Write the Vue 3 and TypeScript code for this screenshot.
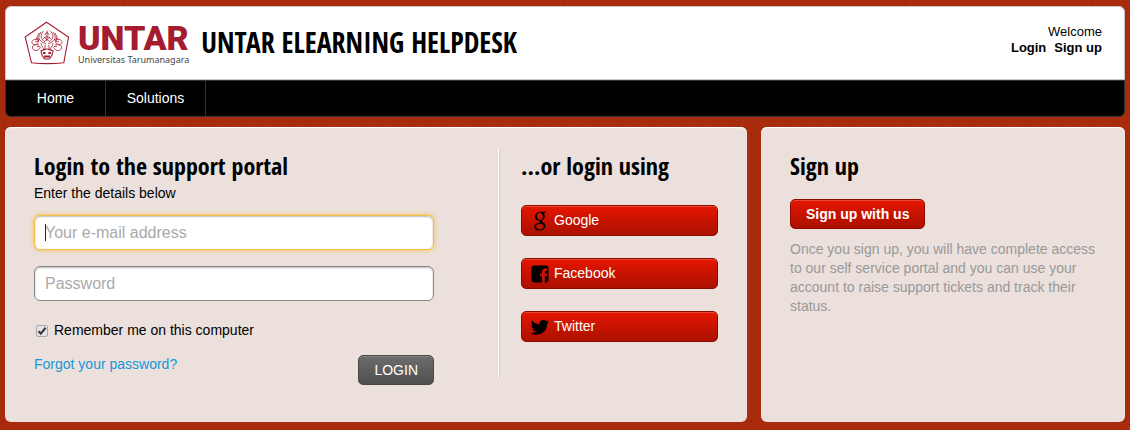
<script setup lang="ts">
import { onMounted, ref } from 'vue'

const navItems: string[] = ['Home', 'Solutions']
const email = ref('')
const password = ref('')
const remember = ref(true)
const emailField = ref<HTMLInputElement | null>(null)

onMounted(() => emailField.value?.focus())
</script>

<template>
  <div class="page">
    <header>
      <div class="banner">
        <a class="brand" href="#">
          <svg class="crest" viewBox="0 0 46 44" fill="none" stroke="#a51c30" aria-hidden="true">
            <path d="M22.5 1.2 44.500 16 39.800 41.800Q23 43.500 7.500 41.800L1.200 16Z" stroke-width="1.100" />
            <g stroke-width=".8">
              <path d="M17 11q-5 6 1 10M29 11q5 6-1 10M19.500 10q-5 5 0 10M26.500 10q5 5 0 10M15 12q-4 6 0 9M31 12q4 6 0 9" />
              <path d="M23 9.500v10M21 14q2-5 4 0M19 18q4-5 8 0M18 21l4 2M28 21l-4 2M20 16l6 5M26 16l-6 5" />
              <path d="M15 20c-4-4-8 0-7 2s5 2 6 0-2-2-3-1M31 20c4-4 8 0 7 2s-5 2-6 0 2-2 3-1" />
              <path d="M15 24c-5-1-8 1-6 4s6 1 7-1-2-2-3-1M31 24c5-1 8 1 6 4s-6 1-7-1 2-2 3-1" />
              <path d="M17 22c0 4 3 4 3 8M29 22c0 4-3 4-3 8M21 24v5M25 24v5M12 17l4 2M34 17l-4 2" />
              <path d="M17 30q6-4 12 0-1 6-4 8h-4q-3-2-4-8Z" stroke-width="1.200" />
              <path d="M19 32h2.500M24.500 32H27M20 35.500h6" stroke-width="2" />
            </g>
          </svg>
          <span class="wordmark">
            <span class="wordmark-name">UNTAR</span>
            <span class="wordmark-sub">Universitas Tarumanagara</span>
          </span>
        </a>
        <h1>UNTAR ELEARNING HELPDESK</h1>
        <div class="account">
          <span>Welcome</span>
          <div class="account-links"><a href="#">Login</a><a href="#">Sign up</a></div>
        </div>
      </div>
      <nav class="nav">
        <a v-for="item in navItems" :key="item" href="#">{{ item }}</a>
      </nav>
    </header>

    <main class="content">
      <section class="panel login-panel">
        <form class="login" @submit.prevent>
          <h2>Login to the support portal</h2>
          <p class="hint">Enter the details below</p>
          <div class="field-wrap">
            <input ref="emailField" v-model="email" class="field email" type="email" placeholder="Your e-mail address" aria-label="Your e-mail address" />
            <span v-if="!email" class="caret"></span>
          </div>
          <input v-model="password" class="field" type="password" placeholder="Password" aria-label="Password" />
          <label class="remember">
            <input v-model="remember" type="checkbox" />
            <svg class="tick" viewBox="0 0 12 12" aria-hidden="true">
              <rect x=".5" y=".5" width="11" height="11" rx="1.500" fill="#e4e4e4" stroke="#a8a8a8" />
              <path v-if="remember" d="M2.500 6.200 4.800 8.600 9.600 2.800" fill="none" stroke="#3c3c3c" stroke-width="2.200" />
            </svg>
            Remember me on this computer
          </label>
          <div class="actions">
            <a href="#">Forgot your password?</a>
            <button class="btn btn-dark" type="submit">LOGIN</button>
          </div>
        </form>
        <div class="social">
          <h2>...or login using</h2>
          <button class="btn btn-social" type="button">
            <svg viewBox="0 0 18 20" aria-hidden="true">
              <path fill="#000" fill-rule="evenodd" d="M9.800.8H15.500L14 1.900H12.300C13.300 2.700 13.800 3.900 13.800 5.100C13.800 7 12.700 8.200 11.600 9C10.600 9.800 10.800 10.400 11.800 11.100C13.200 12.100 14.400 13.100 14.400 15C14.400 17.500 12 19.500 8.500 19.500C5.300 19.500 3.200 18.100 3.200 15.800C3.200 13.200 6 12 9 11.900C8.400 11.200 8.200 10.700 8.500 9.800C5.600 10 4 8 4 5.700C4 3 6.400.8 9.800.8ZM9 1.800C6.900 1.800 6 3 6 4.700C6 6.900 7.200 8.900 9.300 8.900C11 8.900 11.800 7.800 11.800 6.200C11.800 4 10.700 1.800 9 1.800ZM9.700 12.700C7 12.700 5 13.500 5 15.500C5 17.300 6.700 18.400 9 18.400C11.400 18.400 12.700 17.300 12.700 15.700C12.700 14.300 11.700 13.700 10.400 12.700Z" />
            </svg>
            <span>Google</span>
          </button>
          <button class="btn btn-social" type="button">
            <svg viewBox="0 0 18 20" aria-hidden="true">
              <path fill="#000" fill-rule="evenodd" d="M3.500 1.500h11Q17.500 1.500 17.500 4.500v11q0 3-3 3h-.6v-6.300h2l.3-2.600h-2.300V8.200q0-1.200 1.200-1.200h1.200V4.600H14.200q-3.200 0-3.200 3.200v1.800H9v2.600h2v6.300H3.500q-3 0-3-3v-11q0-3 3-3Z" />
            </svg>
            <span>Facebook</span>
          </button>
          <button class="btn btn-social" type="button">
            <svg viewBox="0 0 18 20" aria-hidden="true">
              <path fill="#000" transform="translate(-.2 1.200) scale(.76)" d="M23.950 4.570a10 10 0 0 1-2.820.77 4.960 4.960 0 0 0 2.160-2.720c-.95.550-2 .950-3.130 1.180a4.920 4.920 0 0 0-8.380 4.480C7.690 8.090 4.070 6.130 1.640 3.160a4.820 4.820 0 0 0-.66 2.480c0 1.710.87 3.210 2.190 4.090a4.900 4.900 0 0 1-2.230-.61v.06a4.920 4.920 0 0 0 3.950 4.830 5 5 0 0 1-2.210.080 4.940 4.940 0 0 0 4.600 3.420A9.870 9.870 0 0 1 0 19.540a13.990 13.990 0 0 0 7.550 2.210c9.050 0 14-7.500 14-13.980 0-.210 0-.420-.020-.630a9.940 9.940 0 0 0 2.460-2.550Z" />
            </svg>
            <span>Twitter</span>
          </button>
        </div>
      </section>

      <section class="panel signup">
        <h2>Sign up</h2>
        <button class="btn btn-signup" type="button">Sign up with us</button>
        <p>Once you sign up, you will have complete access to our self service portal and you can use your account to raise support tickets and track their status.</p>
      </section>
    </main>
  </div>
</template>

<style>
html {
  background: #aa2c0e;
}
</style>

<style scoped>
* {
  box-sizing: border-box;
}
.page {
  padding: 6px 5px 8px;
  font: 14px/19px "Liberation Sans", Arial, sans-serif;
  color: #000;
  background:
    radial-gradient(circle at 3px 5px, #9f280b 0 1px, transparent 1px) 0 0 / 11px 13px,
    radial-gradient(circle at 4px 2px, #a2290c 0 1px, transparent 1px) 0 0 / 17px 7px,
    #aa2c0e;
}
h1,
h2,
p {
  margin: 0;
}
h1,
h2 {
  font-family: "Open Sans Condensed", "Open Sans", sans-serif;
  font-weight: 700;
}
.banner {
  display: flex;
  align-items: center;
  height: 74px;
  padding: 0 22px 0 18px;
  background: #fff;
  border: 1px solid #c8c8c8;
  border-radius: 6px 6px 0 0;
}
.brand {
  display: flex;
  align-items: center;
  gap: 8px;
  color: #a51c30;
  text-decoration: none;
}
.crest {
  width: 46px;
  height: 44px;
}
.wordmark {
  display: flex;
  flex-direction: column;
  padding-top: 4px;
}
.wordmark-name {
  font: 900 34px/30px Roboto, sans-serif;
}
.wordmark-sub {
  font: 9px/14px "Noto Sans", sans-serif;
  color: #444;
}
h1 {
  margin: 0 0 2px 12px;
  font-size: 28px;
  line-height: 36px;
}
.account {
  margin-left: auto;
  padding-bottom: 6px;
  font-size: 13px;
  line-height: 16px;
  text-align: right;
}
.account-links {
  display: flex;
  gap: 8px;
}
.account-links a {
  color: #000;
  font-weight: 700;
  text-decoration: none;
}
.nav {
  display: flex;
  background: #000;
  border: 1px solid #333;
  border-radius: 0 0 6px 6px;
}
.nav a {
  width: 100px;
  line-height: 35px;
  text-align: center;
  color: #fff;
  text-decoration: none;
  border-right: 1px solid #333;
}
.content {
  display: grid;
  grid-template-columns: minmax(0, 742fr) minmax(0, 364fr);
  gap: 14px;
  margin-top: 10px;
}
.panel {
  background: #ebe0dc;
  border-radius: 6px;
  box-shadow: inset 0 1px 1px #fff;
}
.login-panel {
  display: grid;
  grid-template-columns: minmax(0, 400fr) minmax(0, 220fr);
  gap: 64px;
  align-items: start;
  padding: 21px 29px 37px;
}
.signup {
  padding: 21px 29px;
}
h2 {
  font-size: 24px;
  line-height: 36px;
}
.social {
  padding: 0 0 36px 22px;
  border-left: 1px solid #fff;
  box-shadow: inset 1px 0 0 #d8d0cc;
}
.hint {
  margin-bottom: 12px;
}
.field-wrap {
  position: relative;
}
.caret {
  position: absolute;
  left: 11px;
  top: 9px;
  width: 1px;
  height: 17px;
  background: #222;
  pointer-events: none;
}
.field {
  display: block;
  width: 100%;
  height: 35px;
  margin-bottom: 16px;
  padding: 0 10px;
  font: 16px/20px "Liberation Sans", Arial, sans-serif;
  border: 1px solid #888;
  border-radius: 6px;
  outline: none;
  background: #fff;
  box-shadow: inset 0 1px 2px #bbb;
}
.field::placeholder {
  color: #aaa;
}
.email:placeholder-shown {
  caret-color: transparent;
}
.field:focus {
  border-color: #f5bd45;
  box-shadow: 0 0 5px #f5bd45, inset 0 1px 2px #bbb;
}
.remember {
  display: flex;
  align-items: center;
  position: relative;
  margin-top: 20px;
  padding-left: 2px;
}
.remember input {
  position: absolute;
  width: 12px;
  height: 12px;
  margin: 0;
  opacity: 0;
}
.tick {
  width: 12px;
  height: 12px;
  margin-right: 6px;
}
.actions {
  display: flex;
  justify-content: space-between;
  align-items: flex-start;
  margin-top: 15px;
}
.actions a {
  color: #1598d8;
  text-decoration: none;
}
.btn {
  font: 14px/20px "Liberation Sans", Arial, sans-serif;
  color: #fff;
  border: 1px solid #8c0d00;
  border-radius: 5px;
  background: linear-gradient(#e51600, #ab1000);
  box-shadow: inset 0 1px 0 #e8493a;
}
.btn-dark {
  height: 30px;
  padding: 0 15px;
  border-color: #484848;
  background: linear-gradient(#6c6c6c, #505050);
  box-shadow: inset 0 1px 0 #858585;
}
.btn-social {
  display: flex;
  align-items: center;
  gap: 5px;
  width: 100%;
  height: 31px;
  margin-top: 22px;
  padding: 0 9px;
}
.btn-social span {
  padding-bottom: 1px;
}
.btn-social svg {
  flex: none;
  width: 18px;
  height: 20px;
}
.social h2 + .btn-social {
  margin-top: 21px;
}
.btn-signup {
  height: 30px;
  margin: 15px 0 11px;
  padding: 0 15px;
  font-weight: 700;
}
.signup p {
  color: #999;
}
</style>
